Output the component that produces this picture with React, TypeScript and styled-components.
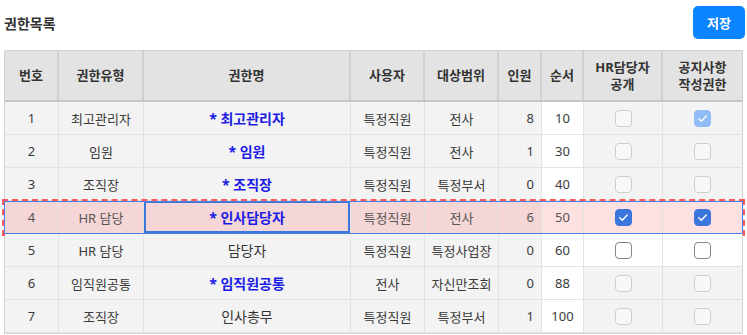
import styled, { createGlobalStyle, css } from "styled-components";

const GlobalStyle = createGlobalStyle`
  body {
    margin: 0;
    background: #ffffff;
    font-family: "Noto Sans", "Noto Sans CJK KR", sans-serif;
    color: #333333;
  }
`;

const COLS = "54px 85px 207px 74px 74px 43px 42px 79px 80px";

const Page = styled.div`
  padding: 6px 4px 0 4px;
  width: 739px;
`;
const TopBar = styled.div`
  display: flex;
  justify-content: space-between;
  align-items: center;
  height: 33px;
  margin-bottom: 11px;
`;
const Title = styled.h2`
  margin: 0;
  font-size: 14px;
  font-weight: 700;
  color: #333333;
`;
const SaveButton = styled.button`
  width: 52px;
  height: 33px;
  margin-right: -2px;
  border: none;
  border-radius: 5px;
  background: #0a84ff;
  color: #ffffff;
  font-family: "Noto Sans", "Noto Sans CJK KR", sans-serif;
  font-size: 13px;
  font-weight: 700;
`;
const Grid = styled.div`
  border-top: 1px solid #d2d2d2;
  border-left: 1px solid #d2d2d2;
  border-bottom: 1px solid #d6d6d6;
`;
const HeadRow = styled.div`
  display: grid;
  grid-template-columns: ${COLS};
  height: 49px;
  border-bottom: 2px solid #c6c6c6;
  background: #e3e3e3;
`;
const HeadCell = styled.div`
  display: flex;
  align-items: center;
  justify-content: center;
  text-align: center;
  border-right: 2px solid #d0d0d0;
  font-size: 13px;
  font-weight: 700;
  line-height: 17px;
  color: #333333;
  white-space: pre-line;
  &:last-child {
    border-right: 1px solid #d0d0d0;
  }
`;
const Row = styled.div<{ $selected?: boolean }>`
  position: relative;
  display: grid;
  grid-template-columns: ${COLS};
  height: 33px;
  ${(p) =>
    p.$selected &&
    css`
      &::after {
        content: "";
        position: absolute;
        inset: 0 0 0 -1px;
        border: 1px solid #4a7fe0;
        outline: 2px dashed #ff5a5a;
        pointer-events: none;
      }
    `}
`;
const Cell = styled.div<{
  $white?: boolean;
  $selected?: boolean;
  $align?: "center" | "right";
  $focus?: boolean;
}>`
  display: flex;
  align-items: center;
  justify-content: ${(p) => (p.$align === "right" ? "flex-end" : "center")};
  padding-right: ${(p) => (p.$align === "right" ? "7px" : "0")};
  border-right: 1px solid #e2e2e2;
  border-bottom: 1px solid #e2e2e2;
  font-size: 13px;
  color: ${(p) => (p.$selected ? "#555555" : "#3a3a3a")};
  background: ${(p) =>
    p.$selected
      ? p.$white
        ? "#fde0e0"
        : "#f5d6d6"
      : p.$white
      ? "#ffffff"
      : "#f3f3f3"};
  &:last-child {
    border-right: 1px solid #d2d2d2;
  }
  ${(p) =>
    p.$focus &&
    css`
      box-shadow: inset 0 0 0 2px #3d77dd;
    `}
`;
const NameText = styled.span<{ $starred?: boolean }>`
  font-size: 14px;
  font-weight: ${(p) => (p.$starred ? 700 : 400)};
  color: ${(p) => (p.$starred ? "#1c1ce6" : "#333333")};
`;
const Box = styled.span<{ $checked?: boolean; $enabled?: boolean }>`
  display: inline-flex;
  align-items: center;
  justify-content: center;
  width: 17px;
  height: 17px;
  box-sizing: border-box;
  border-radius: 4px;
  ${(p) =>
    p.$checked
      ? css`
          background: ${p.$enabled ? "#3a76dc" : "#8fbcf4"};
          border: 1px solid ${p.$enabled ? "#3a76dc" : "#8fbcf4"};
        `
      : css`
          background: ${p.$enabled ? "#ffffff" : "#f8f8f8"};
          border: 1px solid ${p.$enabled ? "#858585" : "#cdcdcd"};
        `}
`;

type Item = {
  no: number;
  type: string;
  name: string;
  starred: boolean;
  user: string;
  scope: string;
  count: number;
  order: number;
  hr: boolean;
  notice: boolean;
};

const items: Item[] = [
  { no: 1, type: "최고관리자", name: "최고관리자", starred: true, user: "특정직원", scope: "전사", count: 8, order: 10, hr: false, notice: true },
  { no: 2, type: "임원", name: "임원", starred: true, user: "특정직원", scope: "전사", count: 1, order: 30, hr: false, notice: false },
  { no: 3, type: "조직장", name: "조직장", starred: true, user: "특정직원", scope: "특정부서", count: 0, order: 40, hr: false, notice: false },
  { no: 4, type: "HR 담당", name: "인사담당자", starred: true, user: "특정직원", scope: "전사", count: 6, order: 50, hr: true, notice: true },
  { no: 5, type: "HR 담당", name: "담당자", starred: false, user: "특정직원", scope: "특정사업장", count: 0, order: 60, hr: false, notice: false },
  { no: 6, type: "임직원공통", name: "임직원공통", starred: true, user: "전사", scope: "자신만조회", count: 0, order: 88, hr: false, notice: false },
  { no: 7, type: "조직장", name: "인사총무", starred: false, user: "특정직원", scope: "특정부서", count: 1, order: 100, hr: false, notice: false },
];

const headers = ["번호", "권한유형", "권한명", "사용자", "대상범위", "인원", "순서", "HR담당자\n공개", "공지사항\n작성권한"];

function Check({ checked, enabled }: { checked: boolean; enabled: boolean }) {
  return (
    <Box $checked={checked} $enabled={enabled}>
      {checked && (
        <svg width="11" height="11" viewBox="0 0 11 11">
          <path d="M1.8 5.8 L4.3 8.2 L9.2 3" fill="none" stroke="#ffffff" strokeWidth="1.4" strokeLinecap="round" strokeLinejoin="round" />
        </svg>
      )}
    </Box>
  );
}

export default function App() {
  return (
    <Page>
      <GlobalStyle />
      <TopBar>
        <Title>권한목록</Title>
        <SaveButton>저장</SaveButton>
      </TopBar>
      <Grid>
        <HeadRow>
          {headers.map((h) => (
            <HeadCell key={h}>{h}</HeadCell>
          ))}
        </HeadRow>
        {items.map((it) => {
          const sel = it.no === 4;
          const editable = it.no === 4 || it.no === 5;
          return (
            <Row key={it.no} $selected={sel}>
              <Cell $selected={sel}>{it.no}</Cell>
              <Cell $selected={sel}>{it.type}</Cell>
              <Cell $selected={sel} $focus={sel}>
                <NameText $starred={it.starred}>
                  {it.starred ? `* ${it.name}` : it.name}
                </NameText>
              </Cell>
              <Cell $selected={sel}>{it.user}</Cell>
              <Cell $selected={sel}>{it.scope}</Cell>
              <Cell $selected={sel} $align="right">{it.count}</Cell>
              <Cell $selected={sel} $white>{it.order}</Cell>
              <Cell $selected={sel} $white={editable}>
                <Check checked={it.hr} enabled={editable} />
              </Cell>
              <Cell $selected={sel} $white={editable}>
                <Check checked={it.notice} enabled={editable} />
              </Cell>
            </Row>
          );
        })}
      </Grid>
    </Page>
  );
}
